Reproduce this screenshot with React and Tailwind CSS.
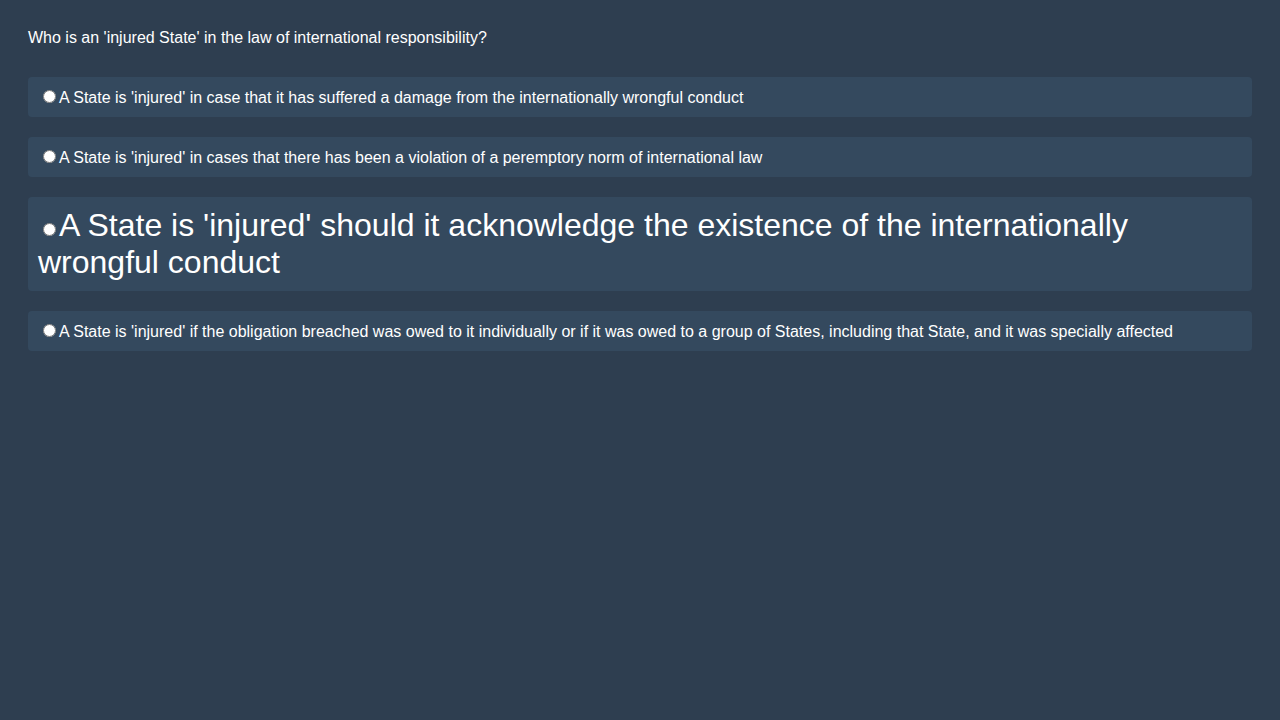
export default function App() {
  const options = [
    { text: "A State is 'injured' in case that it has suffered a damage from the internationally wrongful conduct", big: false },
    { text: "A State is 'injured' in cases that there has been a violation of a peremptory norm of international law", big: false },
    { text: "A State is 'injured' should it acknowledge the existence of the internationally wrongful conduct", big: true },
    { text: "A State is 'injured' if the obligation breached was owed to it individually or if it was owed to a group of States, including that State, and it was specially affected", big: false },
  ];
  return (
    <div className="min-h-[720px] w-full bg-[#2e3e50] p-[28px] text-white" style={{ fontFamily: '"Liberation Sans", Arial, sans-serif' }}>
      <p className="text-[16px] leading-[20px] mb-[29px]">Who is an 'injured State' in the law of international responsibility?</p>
      {options.map((o, i) => (
        <label
          key={i}
          className={`block mb-[20px] rounded-[4px] bg-[#34495e] px-[10px] py-[10px] ${o.big ? "text-[32px] leading-[37px]" : "text-[16px] leading-[19px]"}`}
        >
          <input type="radio" name="q" className="mt-[3px] mr-[3px] ml-[5px]" />
          {o.text}
        </label>
      ))}
    </div>
  );
}
